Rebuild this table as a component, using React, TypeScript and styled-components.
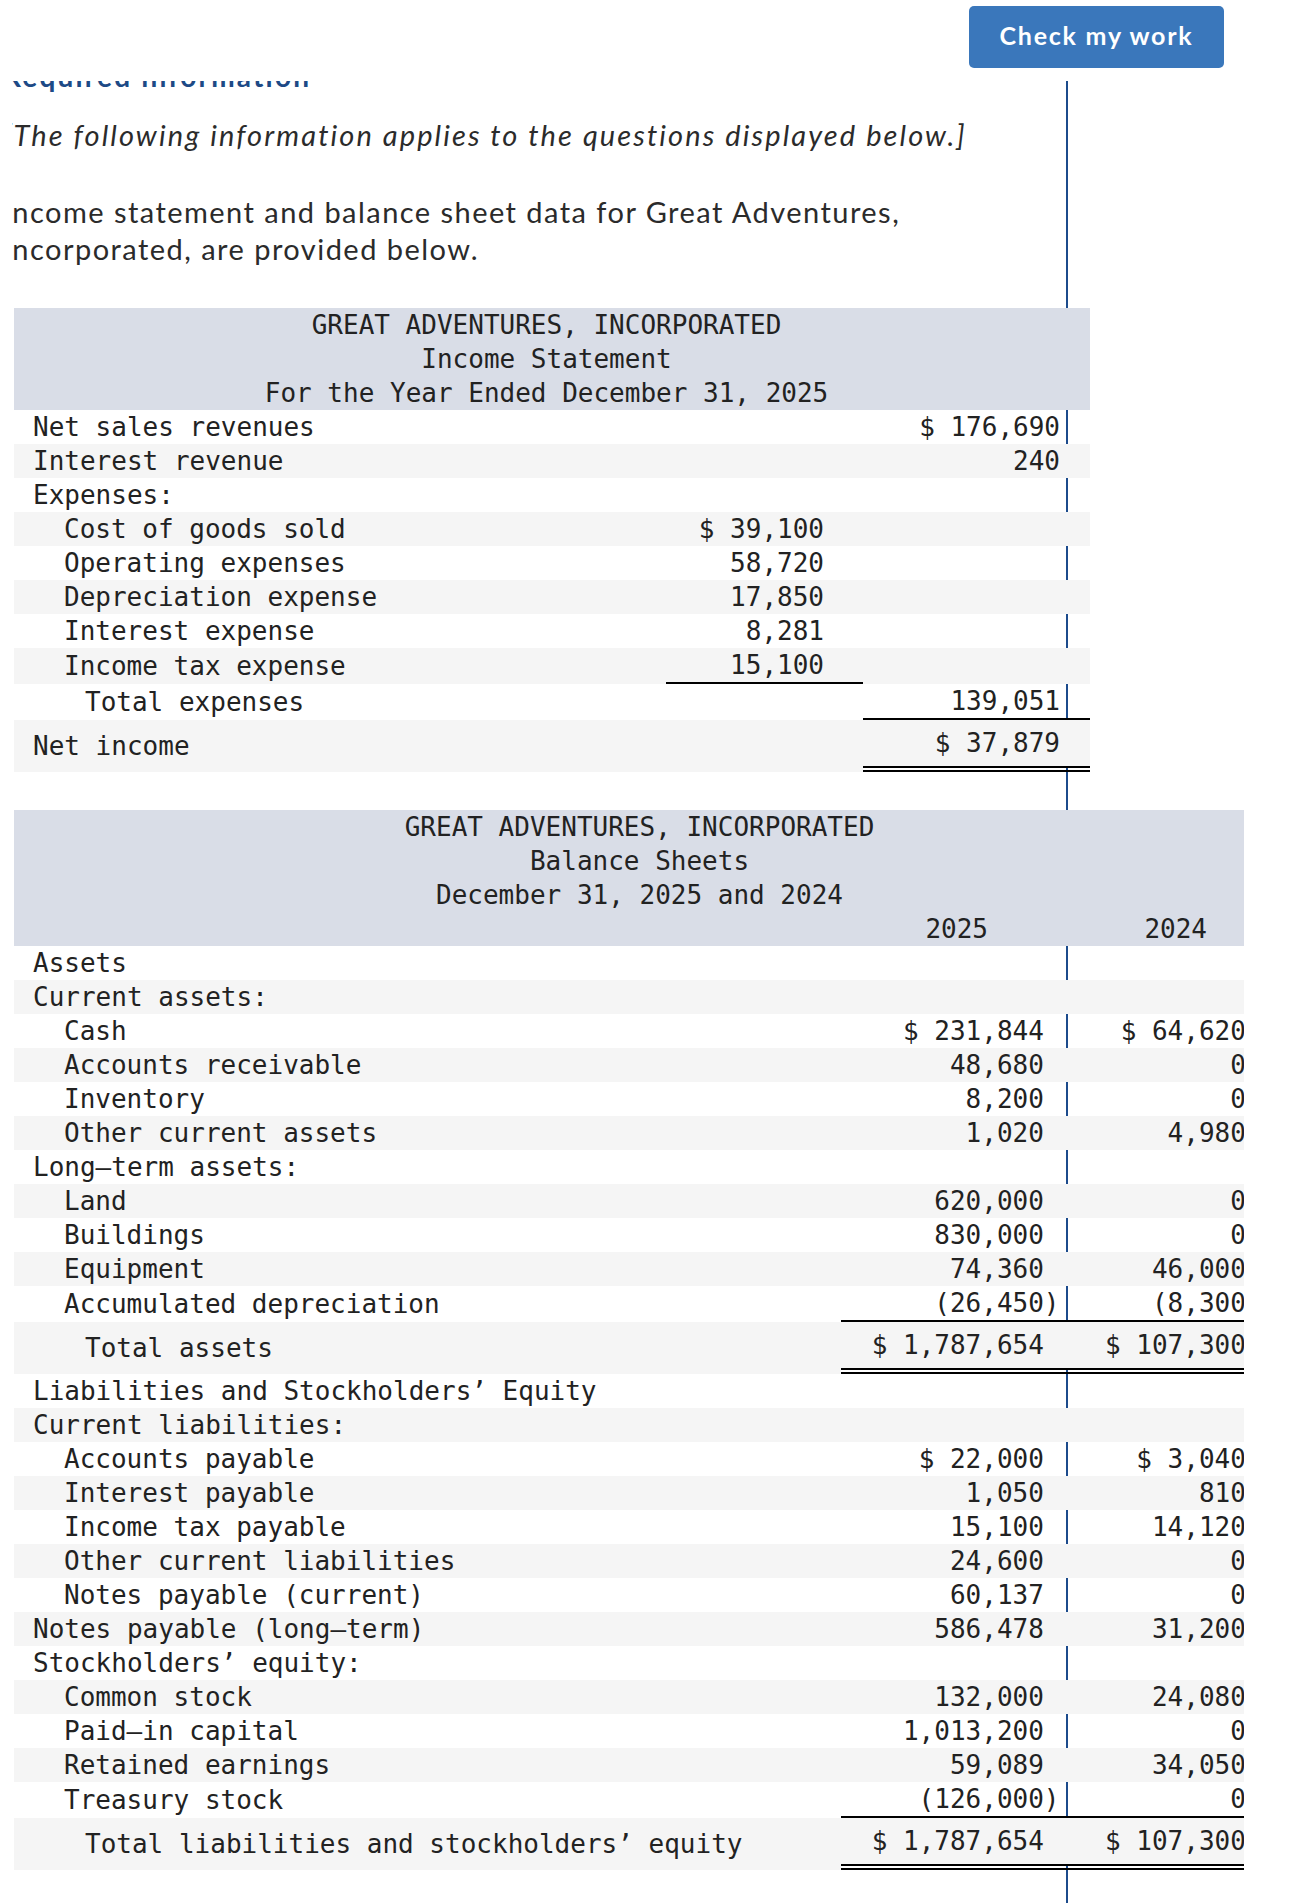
import React from "react";
import styled, { createGlobalStyle } from "styled-components";

const GlobalStyle = createGlobalStyle`
  html, body { margin: 0; padding: 0; background: #ffffff; }
  body { font-family: "Lato", "Liberation Sans", sans-serif; color: #2b2b2b; }
`;

type Rule = "none" | "single" | "double";

const Page = styled.div`
  width: 1309px;
  min-height: 1903px;
`;

const TopBar = styled.header`
  height: 81px;
  box-sizing: border-box;
  padding: 6px 85px 0 0;
  display: flex;
  justify-content: flex-end;
  align-items: flex-start;
`;

const CheckButton = styled.button`
  width: 255px;
  height: 62px;
  border: none;
  border-radius: 5px;
  background: #3a77bb;
  color: #ffffff;
  font-family: "Lato", "Liberation Sans", sans-serif;
  font-weight: 700;
  font-size: 25px;
  letter-spacing: 1.75px;
  padding: 0 0 4px;
  cursor: pointer;
`;

const Viewport = styled.main`
  margin-left: 12px;
  width: 1232px;
  overflow: hidden;
`;

const Column = styled.div`
  box-sizing: border-box;
  width: 1065px;
  margin-left: -9px;
  border-right: 2px solid #1c4b8c;
  padding-bottom: 80px;
`;

const ClippedHeading = styled.h2`
  margin: -22px 0 0;
  font-size: 28px;
  line-height: 34px;
  font-weight: 700;
  color: #1d4a86;
  letter-spacing: 2.2px;
  white-space: nowrap;
`;

const Lead = styled.p`
  margin: 24px 0 0;
  font-style: italic;
  font-size: 29px;
  line-height: 36px;
  letter-spacing: 2.1px;
  white-space: nowrap;
`;

const Intro = styled.p`
  margin: 40px 0 0;
  max-width: 1000px;
  font-size: 29px;
  line-height: 37px;
  letter-spacing: 1.46px;
`;

const Sheet = styled.table<{ $width: number; $top: number }>`
  margin: ${(p) => p.$top}px 0 0 11px;
  width: ${(p) => p.$width}px;
  border-collapse: separate;
  border-spacing: 0;
  table-layout: fixed;
  font-family: "DejaVu Sans Mono", "Liberation Mono", monospace;
  font-size: 26px;
  color: #222222;
`;

const Col = styled.col<{ $w: number }>`
  width: ${(p) => p.$w}px;
`;

const TitleCell = styled.th<{ $padLeft: number; $padRight: number }>`
  background: #d9dde7;
  font-weight: 400;
  text-align: center;
  line-height: 34px;
  padding: 0 ${(p) => p.$padRight}px 0 ${(p) => p.$padLeft}px;
  white-space: pre;
`;

const TitleLine = styled.div`
  height: 34px;
`;

const HeadCell = styled.th<{ $padRight: number }>`
  background: #d9dde7;
  font-weight: 400;
  text-align: right;
  line-height: 34px;
  padding: 0 ${(p) => p.$padRight}px 0 0;
  white-space: pre;
`;

const LabelCell = styled.td<{ $level: number; $stripe: boolean }>`
  padding: 0 0 0 ${(p) => [19, 50, 71][p.$level]}px;
  line-height: 34px;
  white-space: pre;
  text-align: left;
  vertical-align: middle;
  background: ${(p) => (p.$stripe ? "#f5f5f5" : "transparent")};
`;

const ValueCell = styled.td<{ $stripe: boolean; $rule: Rule; $padRight: number }>`
  padding: 0 ${(p) => p.$padRight}px 0 0;
  line-height: ${(p) => (p.$rule === "double" ? 46 : 34)}px;
  white-space: pre;
  text-align: right;
  vertical-align: middle;
  background: ${(p) => (p.$stripe ? "#f5f5f5" : "transparent")};
  background-clip: padding-box;
  border-bottom: ${(p) =>
    p.$rule === "double" ? "6px double #000000" : p.$rule === "single" ? "2px solid #000000" : "none"};
`;

type IncomeRow = { label: string; level: number; c1?: string; c2?: string; r1?: Rule; r2?: Rule };

const incomeRows: IncomeRow[] = [
  { label: "Net sales revenues", level: 0, c2: "$ 176,690" },
  { label: "Interest revenue", level: 0, c2: "240" },
  { label: "Expenses:", level: 0 },
  { label: "Cost of goods sold", level: 1, c1: "$ 39,100" },
  { label: "Operating expenses", level: 1, c1: "58,720" },
  { label: "Depreciation expense", level: 1, c1: "17,850" },
  { label: "Interest expense", level: 1, c1: "8,281" },
  { label: "Income tax expense", level: 1, c1: "15,100", r1: "single" },
  { label: "Total expenses", level: 2, c2: "139,051", r2: "single" },
  { label: "Net income", level: 0, c2: "$ 37,879", r2: "double" },
];

type BalanceRow = { label: string; level: number; a?: string; b?: string; rule?: Rule };

const balanceRows: BalanceRow[] = [
  { label: "Assets", level: 0 },
  { label: "Current assets:", level: 0 },
  { label: "Cash", level: 1, a: "$ 231,844", b: "$ 64,620" },
  { label: "Accounts receivable", level: 1, a: "48,680", b: "0" },
  { label: "Inventory", level: 1, a: "8,200", b: "0" },
  { label: "Other current assets", level: 1, a: "1,020", b: "4,980" },
  { label: "Long–term assets:", level: 0 },
  { label: "Land", level: 1, a: "620,000", b: "0" },
  { label: "Buildings", level: 1, a: "830,000", b: "0" },
  { label: "Equipment", level: 1, a: "74,360", b: "46,000" },
  { label: "Accumulated depreciation", level: 1, a: "(26,450)", b: "(8,300)", rule: "single" },
  { label: "Total assets", level: 2, a: "$ 1,787,654", b: "$ 107,300", rule: "double" },
  { label: "Liabilities and Stockholders’ Equity", level: 0 },
  { label: "Current liabilities:", level: 0 },
  { label: "Accounts payable", level: 1, a: "$ 22,000", b: "$ 3,040" },
  { label: "Interest payable", level: 1, a: "1,050", b: "810" },
  { label: "Income tax payable", level: 1, a: "15,100", b: "14,120" },
  { label: "Other current liabilities", level: 1, a: "24,600", b: "0" },
  { label: "Notes payable (current)", level: 1, a: "60,137", b: "0" },
  { label: "Notes payable (long–term)", level: 0, a: "586,478", b: "31,200" },
  { label: "Stockholders’ equity:", level: 0 },
  { label: "Common stock", level: 1, a: "132,000", b: "24,080" },
  { label: "Paid–in capital", level: 1, a: "1,013,200", b: "0" },
  { label: "Retained earnings", level: 1, a: "59,089", b: "34,050" },
  { label: "Treasury stock", level: 1, a: "(126,000)", b: "0", rule: "single" },
  { label: "Total liabilities and stockholders’ equity", level: 2, a: "$ 1,787,654", b: "$ 107,300", rule: "double" },
];

const CH = 15.65;
const parenPad = (base: number, v?: string) => (v && v.endsWith(")") ? base : base + CH);

function IncomeStatement() {
  return (
    <Sheet $width={1076} $top={41}>
      <colgroup>
        <Col $w={652} />
        <Col $w={197} />
        <Col $w={227} />
      </colgroup>
      <thead>
        <tr>
          <TitleCell colSpan={3} $padLeft={0} $padRight={11}>
            <TitleLine>GREAT ADVENTURES, INCORPORATED</TitleLine>
            <TitleLine>Income Statement</TitleLine>
            <TitleLine>For the Year Ended December 31, 2025</TitleLine>
          </TitleCell>
        </tr>
      </thead>
      <tbody>
        {incomeRows.map((r, i) => {
          const stripe = i % 2 === 1;
          return (
            <tr key={r.label}>
              <LabelCell $level={r.level} $stripe={stripe}>{r.label}</LabelCell>
              <ValueCell $stripe={stripe} $rule={r.r1 ?? "none"} $padRight={39}>{r.c1 ?? ""}</ValueCell>
              <ValueCell $stripe={stripe} $rule={r.r2 ?? "none"} $padRight={30}>{r.c2 ?? ""}</ValueCell>
            </tr>
          );
        })}
      </tbody>
    </Sheet>
  );
}

function BalanceSheet() {
  return (
    <Sheet $width={1248} $top={38}>
      <colgroup>
        <Col $w={827} />
        <Col $w={225} />
        <Col $w={196} />
      </colgroup>
      <thead>
        <tr>
          <TitleCell colSpan={3} $padLeft={3} $padRight={0}>
            <TitleLine>GREAT ADVENTURES, INCORPORATED</TitleLine>
            <TitleLine>Balance Sheets</TitleLine>
            <TitleLine>December 31, 2025 and 2024</TitleLine>
          </TitleCell>
        </tr>
        <tr>
          <HeadCell $padRight={0}></HeadCell>
          <HeadCell $padRight={78}>2025</HeadCell>
          <HeadCell $padRight={55}>2024</HeadCell>
        </tr>
      </thead>
      <tbody>
        {balanceRows.map((r, i) => {
          const stripe = i % 2 === 1;
          const rule = r.rule ?? "none";
          return (
            <tr key={r.label}>
              <LabelCell $level={r.level} $stripe={stripe}>{r.label}</LabelCell>
              <ValueCell $stripe={stripe} $rule={rule} $padRight={parenPad(6.5, r.a)}>{r.a ?? ""}</ValueCell>
              <ValueCell $stripe={stripe} $rule={rule} $padRight={parenPad(0.5, r.b)}>{r.b ?? ""}</ValueCell>
            </tr>
          );
        })}
      </tbody>
    </Sheet>
  );
}

export default function App() {
  return (
    <Page>
      <GlobalStyle />
      <TopBar>
        <CheckButton type="button">Check my work</CheckButton>
      </TopBar>
      <Viewport>
        <Column>
          <ClippedHeading>Required information</ClippedHeading>
          <Lead>[The following information applies to the questions displayed below.]</Lead>
          <Intro>
            Income statement and balance sheet data for Great Adventures, Incorporated, are provided below.
          </Intro>
          <IncomeStatement />
          <BalanceSheet />
        </Column>
      </Viewport>
    </Page>
  );
}
